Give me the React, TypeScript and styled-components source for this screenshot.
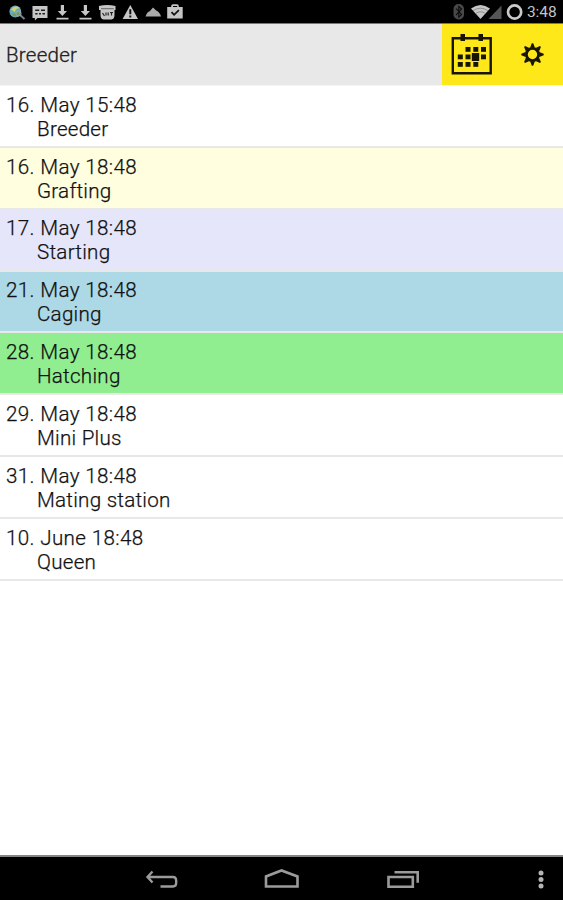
import React from 'react';
import styled, { createGlobalStyle } from 'styled-components';

const GlobalStyle = createGlobalStyle`
  * { box-sizing: border-box; }
  body { margin: 0; background: #fff; font-family: Roboto, "Noto Sans", sans-serif; }
  svg { display: block; flex: none; }
`;

const Screen = styled.div`
  width: 563px;
  height: 900px;
  display: flex;
  flex-direction: column;
  overflow: hidden;
  background: #fff;
`;

const StatusBar = styled.header`
  height: 24px;
  flex: none;
  display: flex;
  justify-content: space-between;
  background: #000;
  border-bottom: 1px solid #777;
`;

const Notifications = styled.div`
  display: flex;
  padding-left: 6px;
`;

const StatusSlot = styled.svg`
  width: 22.6px;
  height: 24px;
`;

const Indicators = styled.div`
  display: flex;
  padding-right: 5px;
`;

const Clock = styled.span`
  width: 31px;
  color: #c4c4c4;
  font-size: 15.5px;
  line-height: 25px;
  letter-spacing: -0.1px;
  white-space: nowrap;
`;

const ActionBar = styled.div`
  height: 62px;
  flex: none;
  display: flex;
  background: #e8e8e8;
  border-bottom: 1px solid #f4f4f4;
`;

const Title = styled.h1`
  flex: 1;
  margin: 0;
  padding-left: 6px;
  font-size: 20.5px;
  font-weight: 300;
  line-height: 63px;
  letter-spacing: 0.27px;
  color: #222;
  -webkit-text-stroke: 0.3px #222;
`;

const Actions = styled.div`
  width: 121px;
  display: flex;
  background: #ffe81a;
`;

const ActionButton = styled.button<{ $width: number }>`
  width: ${p => p.$width}px;
  height: 61px;
  padding: 0;
  border: 0;
  background: transparent;
`;

const EventList = styled.ul`
  flex: 1;
  margin: 0;
  padding: 0;
  list-style: none;
`;

const EventRow = styled.li<{ $tone: string }>`
  height: 61.85px;
  padding: 6.8px 0 0 6px;
  background: ${p => p.$tone};
  border-bottom: 2px solid #e8e8e8;
  color: #111;
  font-size: 20.6px;
  font-weight: 300;
  line-height: 24px;
  -webkit-text-stroke: 0.25px #111;
`;

const EventTime = styled.div`
  letter-spacing: 0.36px;
`;

const EventName = styled.div`
  padding-left: 31px;
  letter-spacing: 0.25px;
`;

const NavBar = styled.nav`
  height: 45px;
  flex: none;
  display: flex;
  justify-content: flex-end;
  background: #000;
  border-top: 2px solid #858585;
`;

const NavButton = styled.button<{ $width: number }>`
  width: ${p => p.$width}px;
  height: 43px;
  padding: 0;
  border: 0;
  background: transparent;
  display: flex;
  justify-content: center;
`;

const events = [
  { time: '16. May 15:48', name: 'Breeder', tone: '#ffffff' },
  { time: '16. May 18:48', name: 'Grafting', tone: '#ffffe0' },
  { time: '17. May 18:48', name: 'Starting', tone: '#e6e6fa' },
  { time: '21. May 18:48', name: 'Caging', tone: '#add8e6' },
  { time: '28. May 18:48', name: 'Hatching', tone: '#90ee90' },
  { time: '29. May 18:48', name: 'Mini Plus', tone: '#ffffff' },
  { time: '31. May 18:48', name: 'Mating station', tone: '#ffffff' },
  { time: '10. June 18:48', name: 'Queen', tone: '#ffffff' },
];

const GREY = '#c6c6c6';

function Slot({ children }: { children: React.ReactNode }) {
  return <StatusSlot viewBox="0 0 22.6 24">{children}</StatusSlot>;
}

function DownloadIcon() {
  return (
    <Slot>
      <path d="M9.8 5h3.2v6h3l-4.6 5-4.6-5h3zM5.5 17.8h12v1.8h-12z" fill={GREY} />
    </Slot>
  );
}

function NotificationIcons() {
  return (
    <Notifications>
      <Slot>
        <circle cx="9.3" cy="11.5" r="5.9" fill="#6fa9bd" />
        <path d="M5 9.5q4-5 8.5-1.5l-3 1-2 3z" fill="#d0d174" />
        <path d="M5.5 13.5l4 0 4-2-1 4q-4 3-7-2z" fill="#6fa04f" />
        <path d="M13.5 14.5l5 4.5" stroke="#777f86" strokeWidth="2" />
        <circle cx="12.5" cy="13.5" r="2.6" fill="none" stroke="#9ba9af" />
      </Slot>
      <Slot>
        <path d="M3.5 6h15v12H8.5l-2.6 2.4V18H3.5z" fill={GREY} />
        <path d="M6.2 10.2h4M12 10.2h4M6.2 13.8h2.4M10 13.8h2M13.4 13.8h2.6" stroke="#222" strokeWidth="1.6" />
      </Slot>
      <DownloadIcon />
      <DownloadIcon />
      <Slot>
        <path d="M3 6q8-2 16.5 0v4H3zM4.5 10h14v5q0 4-3 4.5h-8q-3-.5-3-4.5z" fill={GREY} />
        <path d="M5 8.7h12.8" stroke="#666" strokeWidth="1" />
        <path d="M6.5 13l2 3M10 12.5v3M12.2 12.5v3M14 12.5h3M15.5 12.5v3" stroke="#222" strokeWidth="1.2" />
      </Slot>
      <Slot>
        <path d="M11.3 5L19 19H3.6z" fill={GREY} />
        <path d="M11.3 9.2v5M11.3 15.5v2" stroke="#111" strokeWidth="2" />
      </Slot>
      <Slot>
        <path d="M3.5 16.5Q5 12 8 11l3-3.5 3.2 3Q18 12.5 19 16.5z" fill="#aaa" />
      </Slot>
      <Slot>
        <path d="M3.2 7h4V6q0-1.8 1.8-1.8h4Q14.8 4.2 14.8 6v1h3.9v11.5H3.2z" fill={GREY} />
        <path d="M9 7V6h4.2v1z" fill="#000" />
        <path d="M7.5 12.2l2.6 2.6 4.8-4.6" fill="none" stroke="#111" strokeWidth="1.8" />
      </Slot>
    </Notifications>
  );
}

function IndicatorIcons() {
  return (
    <svg width="78" height="24" viewBox="449 0 78 24">
      <rect x="453.5" y="4" width="10.5" height="15.5" rx="5" fill="#484848" />
      <path d="M456 8.5l5.5 6-2.7 2.6V6.5l2.7 2.6-5.5 6" fill="none" stroke="#0b0b0b" strokeWidth="1.1" />
      <path d="M471 8.5Q480.5 1.5 490 8.5L480.5 19z" fill="#c6c6c6" />
      <path d="M473 10.7q7.5-5 15 0M475.5 13.5q5-3.5 10 0" fill="none" stroke="#777" strokeWidth=".7" />
      <path d="M501.5 5.5V19H488.5z" fill="#555" />
      <circle cx="514.6" cy="12" r="6.6" fill="none" stroke="#c9c9c9" strokeWidth="2.7" />
    </svg>
  );
}

const calendarDays = [
  [465.5, 47], [473.3, 47], [481, 47],
  [457.8, 54.5], [465.5, 54.5], [481, 54.5],
  [457.8, 62], [465.5, 62], [473.3, 62],
];

function CalendarIcon() {
  return (
    <svg width="60" height="61" viewBox="442 24 60 61">
      <path d="M452.8 38.2h37.9v35H452.8z" fill="none" stroke="#171500" strokeWidth="2.4" />
      <path d="M460.5 34h4.5v7h-4.5zM478.5 34h4.5v7h-4.5z" fill="#171500" />
      {calendarDays.map(([x, y]) => (
        <rect key={`${x}-${y}`} x={x} y={y} width="5" height="4.8" fill="#171500" />
      ))}
      <rect x="471.8" y="53" width="7.4" height="8" fill="#171500" />
    </svg>
  );
}

function GearIcon() {
  return (
    <svg width="61" height="61" viewBox="502 24 61 61">
      <g transform="translate(532.5 54.5)" fill="#171500">
        <circle r="6.1" fill="none" stroke="#171500" strokeWidth="2.8" />
        {[0, 45, 90, 135, 180, 225, 270, 315].map(a => (
          <path key={a} d="M-2.4-6.8L-.7-11.2H.7L2.4-6.8z" transform={`rotate(${a})`} />
        ))}
      </g>
    </svg>
  );
}

export default function App() {
  return (
    <Screen>
      <GlobalStyle />
      <StatusBar>
        <NotificationIcons />
        <Indicators>
          <IndicatorIcons />
          <Clock>3:48</Clock>
        </Indicators>
      </StatusBar>
      <ActionBar>
        <Title>Breeder</Title>
        <Actions>
          <ActionButton $width={60} aria-label="Calendar"><CalendarIcon /></ActionButton>
          <ActionButton $width={61} aria-label="Settings"><GearIcon /></ActionButton>
        </Actions>
      </ActionBar>
      <EventList>
        {events.map(event => (
          <EventRow key={event.time} $tone={event.tone}>
            <EventTime>{event.time}</EventTime>
            <EventName>{event.name}</EventName>
          </EventRow>
        ))}
      </EventList>
      <NavBar>
        <NavButton $width={120} aria-label="Back">
          <svg width="36" height="43" viewBox="144 857 36 43" fill="none" stroke="#9b9b9b" strokeWidth="2.4">
            <path d="M152.5 871.5l-5 5.5 5 5.5M148 877h25q3.2 0 3.2 4v1.5q0 4-3.2 4H160.5" />
          </svg>
        </NavButton>
        <NavButton $width={120} aria-label="Home">
          <svg width="38" height="43" viewBox="263 857 38 43" fill="none" stroke="#9b9b9b" strokeWidth="2.6">
            <path d="M266 886.5v-10l15.5-6 16 6v10z" />
          </svg>
        </NavButton>
        <NavButton $width={122} aria-label="Recent apps">
          <svg width="36" height="43" viewBox="385 857 36 43" fill="none" stroke="#9b9b9b" strokeWidth="2.6">
            <path d="M388.5 877h24.3v9.7h-24.3zM394.5 872.3h23.2v10.5" />
          </svg>
        </NavButton>
        <NavButton $width={99} aria-label="More options">
          <svg width="99" height="43" viewBox="464 857 99 43" fill="#b4b4b4">
            <circle cx="541" cy="873" r="2.5" />
            <circle cx="541" cy="879.5" r="2.5" />
            <circle cx="541" cy="886" r="2.5" />
          </svg>
        </NavButton>
      </NavBar>
    </Screen>
  );
}
